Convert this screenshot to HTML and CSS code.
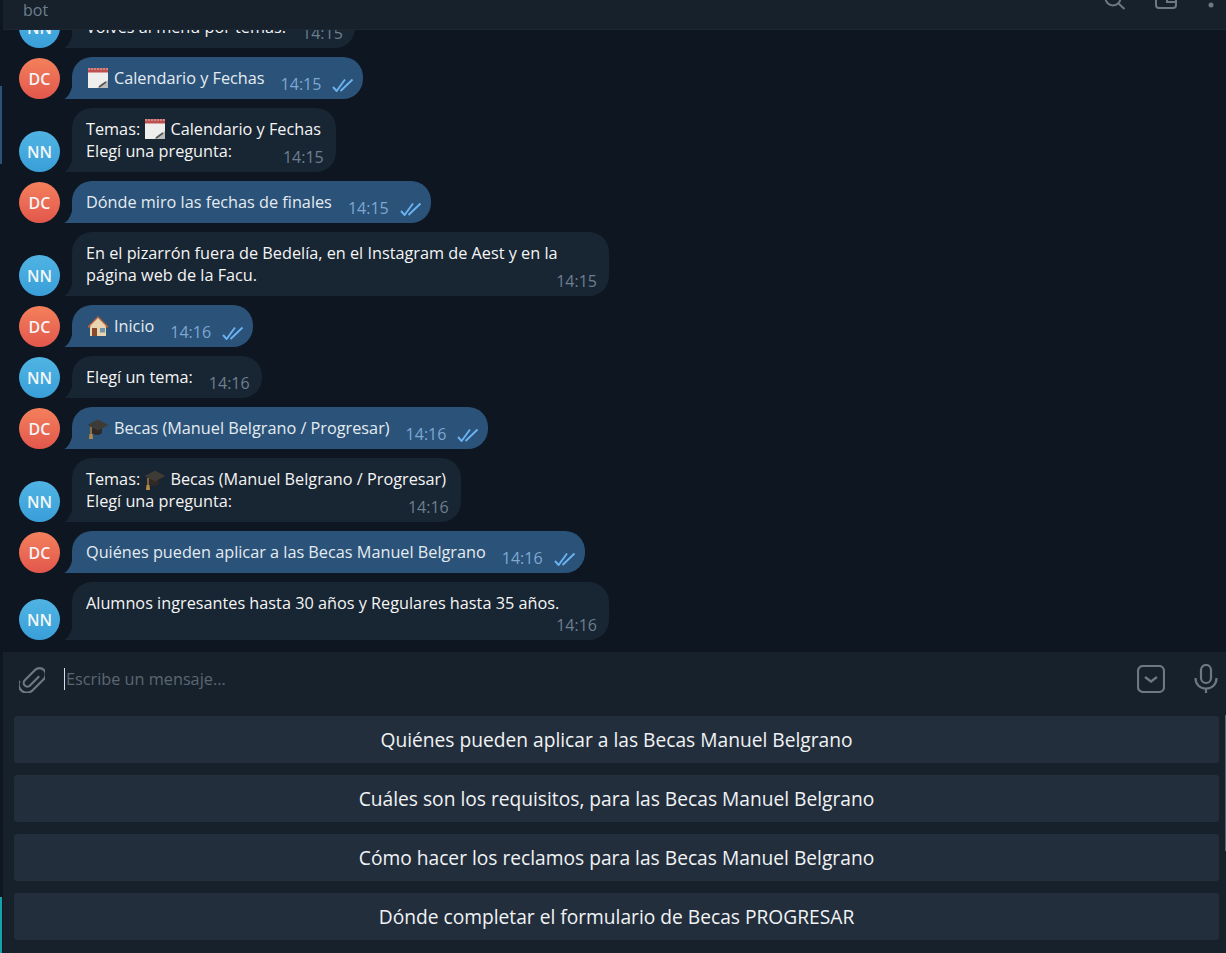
FILE: index.html
```html
<!DOCTYPE html>
<html lang="es">
<head>
<meta charset="utf-8">
<title>bot</title>
<link rel="stylesheet" href="styles.css">
</head>
<body>
<svg class="defs" width="0" height="0" aria-hidden="true">
  <defs>
    <symbol id="checks" viewBox="0 0 22 14">
      <path d="M1 9l3.600 4L13 1.500M8.500 13L20.500 1.500" fill="none" stroke="#6ab3f3" stroke-width="1.900"/>
    </symbol>
    <symbol id="cal" viewBox="0 0 22 22">
      <rect x="1" y="1" width="20" height="20" fill="#efeeec"/>
      <rect x="1" y="1" width="20" height="4.500" fill="#c0504f"/>
      <path d="M2 1v2M5 1v2M8 1v2M11 1v2M14 1v2M17 1v2M20 1v2" stroke="#ddd" stroke-width=".8"/>
      <path d="M10 21l11-8v8z" fill="#bcbcbc"/>
      <path d="M12 20l7-5" stroke="#555" stroke-width="1.600"/>
    </symbol>
    <symbol id="house" viewBox="0 0 22 22">
      <path d="M3 11h16v10H3z" fill="#e9d5b0"/>
      <path d="M11 1L0.500 11.500 2 13 11 4.500 20 13l1.500-1.500z" fill="#b5623f"/>
      <path d="M11 3L3 11h16z" fill="#e9d5b0"/>
      <rect x="5" y="13" width="5" height="8" fill="#8a4b2d"/>
      <rect x="13" y="13" width="5" height="4.500" fill="#6f93a8"/>
    </symbol>
    <symbol id="cap" viewBox="0 0 22 22">
      <path d="M5 10v6c2 2.500 8 2.500 10 0v-6z" fill="#2f2a26"/>
      <path d="M0.500 8L11 2.500 21.500 8 11 13.500z" fill="#3e3a36"/>
      <path d="M4 10v7" stroke="#a8793a" stroke-width="1.500"/>
      <path d="M2.500 17h3l.5 5H2z" fill="#b58a45"/>
    </symbol>
    <symbol id="tail-in" viewBox="0 0 8 12">
      <path d="M8 0v12H0c3-1 6-5 8-12z" fill="#182533"/>
    </symbol>
    <symbol id="tail-out" viewBox="0 0 8 12">
      <path d="M8 0v12H0c3-1 6-5 8-12z" fill="#2b5278"/>
    </symbol>
  </defs>
</svg>

<div class="app">
  <span class="edge edge--blue"></span>
  <span class="edge edge--teal"></span>
  <span class="edge edge--right"></span>

  <header class="topbar">
    <span class="topbar__sub">bot</span>
    <div class="topbar__icons">
      <svg class="ticon ticon--search" viewBox="0 0 24 10"><circle cx="9" cy="-2" r="7.500"/><path d="M14.500 3.500l6 5.500"/></svg>
      <svg class="ticon ticon--panel" viewBox="0 0 24 10"><rect x="2" y="-10" width="20" height="18" rx="3"/><path d="M13 -6v8h9"/></svg>
      <svg class="ticon ticon--dot" viewBox="0 0 6 10"><circle cx="3" cy="5" r="2.500"/></svg>
    </div>
  </header>

  <main class="chat">
    <div class="row">
      <div class="avatar avatar--nn">NN</div>
      <div class="bubble bubble--in"><svg class="tail"><use href="#tail-in"/></svg><span class="text">Volvés al menú por temas:</span><span class="meta"><span class="time">14:15</span></span></div>
    </div>
    <div class="row">
      <div class="avatar avatar--dc">DC</div>
      <div class="bubble bubble--out"><svg class="tail"><use href="#tail-out"/></svg><span class="text"><svg class="emoji"><use href="#cal"/></svg>Calendario y Fechas</span><span class="meta"><span class="time">14:15</span><svg class="checks"><use href="#checks"/></svg></span></div>
    </div>
    <div class="row">
      <div class="avatar avatar--nn">NN</div>
      <div class="bubble bubble--in"><svg class="tail"><use href="#tail-in"/></svg><span class="text">Temas: <svg class="emoji emoji--inline"><use href="#cal"/></svg>Calendario y Fechas<br>Elegí una pregunta:</span><span class="meta meta--overlap"><span class="time">14:15</span></span></div>
    </div>
    <div class="row">
      <div class="avatar avatar--dc">DC</div>
      <div class="bubble bubble--out"><svg class="tail"><use href="#tail-out"/></svg><span class="text">Dónde miro las fechas de finales</span><span class="meta"><span class="time">14:15</span><svg class="checks"><use href="#checks"/></svg></span></div>
    </div>
    <div class="row">
      <div class="avatar avatar--nn">NN</div>
      <div class="bubble bubble--in bubble--wide"><svg class="tail"><use href="#tail-in"/></svg><span class="text">En el pizarrón fuera de Bedelía, en el Instagram de Aest y en la<br>página web de la Facu.</span><span class="meta"><span class="time">14:15</span></span></div>
    </div>
    <div class="row">
      <div class="avatar avatar--dc">DC</div>
      <div class="bubble bubble--out"><svg class="tail"><use href="#tail-out"/></svg><span class="text"><svg class="emoji"><use href="#house"/></svg>Inicio</span><span class="meta"><span class="time">14:16</span><svg class="checks"><use href="#checks"/></svg></span></div>
    </div>
    <div class="row">
      <div class="avatar avatar--nn">NN</div>
      <div class="bubble bubble--in"><svg class="tail"><use href="#tail-in"/></svg><span class="text">Elegí un tema:</span><span class="meta"><span class="time">14:16</span></span></div>
    </div>
    <div class="row">
      <div class="avatar avatar--dc">DC</div>
      <div class="bubble bubble--out"><svg class="tail"><use href="#tail-out"/></svg><span class="text"><svg class="emoji"><use href="#cap"/></svg>Becas (Manuel Belgrano / Progresar)</span><span class="meta"><span class="time">14:16</span><svg class="checks"><use href="#checks"/></svg></span></div>
    </div>
    <div class="row">
      <div class="avatar avatar--nn">NN</div>
      <div class="bubble bubble--in"><svg class="tail"><use href="#tail-in"/></svg><span class="text">Temas: <svg class="emoji emoji--inline"><use href="#cap"/></svg>Becas (Manuel Belgrano / Progresar)<br>Elegí una pregunta:</span><span class="meta meta--overlap"><span class="time">14:16</span></span></div>
    </div>
    <div class="row">
      <div class="avatar avatar--dc">DC</div>
      <div class="bubble bubble--out"><svg class="tail"><use href="#tail-out"/></svg><span class="text">Quiénes pueden aplicar a las Becas Manuel Belgrano</span><span class="meta"><span class="time">14:16</span><svg class="checks"><use href="#checks"/></svg></span></div>
    </div>
    <div class="row">
      <div class="avatar avatar--nn">NN</div>
      <div class="bubble bubble--in bubble--wide bubble--stack"><svg class="tail"><use href="#tail-in"/></svg><span class="text">Alumnos ingresantes hasta 30 años y Regulares hasta 35 años.</span><span class="meta"><span class="time">14:16</span></span></div>
    </div>
  </main>

  <section class="composer">
    <svg class="cicon cicon--clip" viewBox="-13 -14 26 28"><g transform="rotate(45)"><path d="M3.200 -7V6a3.700 3.700 0 0 1-7.400 0V-8.500a6.300 6.300 0 0 1 12.600 0V7.500a8.200 8.200 0 0 1-16 2.500"/></g></svg>
    <div class="composer__input"><span class="caret"></span><span class="placeholder">Escribe un mensaje...</span></div>
    <svg class="cicon cicon--kbd" viewBox="0 0 28 28"><rect x="1" y="1" width="26" height="26" rx="5"/><path d="M8 12l6 4.500 6-4.500"/></svg>
    <svg class="cicon cicon--mic" viewBox="0 0 24 30"><rect x="7" y="1" width="10" height="18" rx="5"/><path d="M1.500 14c0 6.500 4.500 10.500 10.500 10.500S22.500 20.500 22.500 14M12 24.500V29"/></svg>
  </section>

  <nav class="keyboard">
    <button class="kbtn">Quiénes pueden aplicar a las Becas Manuel Belgrano</button>
    <button class="kbtn">Cuáles son los requisitos, para las Becas Manuel Belgrano</button>
    <button class="kbtn">Cómo hacer los reclamos para las Becas Manuel Belgrano</button>
    <button class="kbtn">Dónde completar el formulario de Becas PROGRESAR</button>
  </nav>
</div>
</body>
</html>
```
FILE: styles.css
```css
* { box-sizing: border-box; }
html, body { margin: 0; height: 100%; }
body {
  background: #0e1621;
  color: #f5f5f5;
  font-family: "Open Sans", "Noto Sans", sans-serif;
  font-size: 16.25px;
  line-height: 22px;
  overflow: hidden;
}
.defs { position: absolute; }
.app {
  position: relative;
  height: 953px;
  padding-left: 3px;
  display: flex;
  flex-direction: column;
  overflow: hidden;
}
.edge { position: absolute; left: 0; width: 2px; }
.edge--blue { top: 86px; height: 78px; background: #2b5278; }
.edge--teal { top: 897px; height: 56px; background: #14a3ad; }
.edge--right { left: auto; right: 0; width: 1px; top: 715px; height: 136px; background: #5b6670; }

.topbar {
  height: 30px;
  flex: none;
  background: #17212b;
  border-bottom: 1px solid #1c2733;
  display: flex;
  justify-content: space-between;
  align-items: flex-end;
  padding: 0 9px 9px 20px;
  position: relative;
}
.topbar__sub { color: #6d7f8f; font-size: 16px; line-height: 22px; margin-bottom: -1px; }
.topbar__icons {
  position: absolute;
  left: 1101px;
  top: 0;
  display: flex;
  gap: 25px;
}
.ticon { height: 10px; overflow: visible; fill: none; stroke: #6d7883; stroke-width: 2; }
.ticon--search, .ticon--panel { width: 24px; }
.ticon--panel { margin-left: 1px; }
.ticon--dot { width: 6px; fill: #6d7883; stroke: none; margin-left: 5px; }

.chat {
  height: 622px;
  flex: none;
  display: flex;
  flex-direction: column;
  justify-content: flex-end;
  gap: 9px;
  padding: 0 0 12px 16px;
  overflow: hidden;
}
.row { display: flex; align-items: flex-end; gap: 12px; flex: none; }
.avatar {
  width: 41px;
  height: 41px;
  border-radius: 50%;
  flex: none;
  display: flex;
  align-items: center;
  justify-content: center;
  color: #f2f6f8;
  font-size: 16px;
  font-weight: 600;
}
.avatar--nn { background: linear-gradient(#4fb4e3, #3a9fd8); }
.avatar--dc { background: linear-gradient(#f4805c, #e2574c); }

.bubble {
  position: relative;
  display: flex;
  justify-content: space-between;
  padding: 10px 12px 10px 14px;
  border-radius: 20px 20px 20px 0;
  white-space: nowrap;
}
.bubble--in { background: #182533; }
.bubble--out { background: #2b5278; color: #e4ecf2; padding-right: 9px; }
.bubble--wide { width: 537px; }
.bubble--wide .meta { margin-left: -10px; }
.bubble--stack { flex-direction: column; padding-bottom: 4px; }
.bubble--stack .meta { align-self: flex-end; margin: 0; }
.tail { position: absolute; left: -8px; bottom: 0; width: 8px; height: 12px; }
.text { display: block; }
.emoji { width: 22px; height: 22px; margin: 0 5px 0 1px; vertical-align: -5px; }
.emoji--inline { margin: 0 4px 0 0; }
.meta {
  display: flex;
  align-items: center;
  flex: none;
  align-self: flex-end;
  margin: 0 0 -6px 16px;
  height: 22px;
}
.meta--overlap { margin-left: -38px; }
.time { color: #6d7f8f; font-size: 16px; }
.bubble--out .time { color: #7da8d3; }
.checks { width: 22px; height: 14px; margin: 2px 0 0 11px; }

.composer {
  height: 62px;
  flex: none;
  background: #17212b;
  display: flex;
  align-items: center;
  padding: 0 8px 8px 16px;
}
.composer__input {
  flex: 1;
  display: flex;
  align-items: center;
  padding-left: 19px;
  color: #5a6773;
}
.caret { width: 1px; height: 22px; background: #d8e0e6; }
.placeholder { margin-left: 1px; }
.cicon { fill: none; stroke: #6d7883; stroke-width: 2.200; flex: none; }
.cicon--clip { width: 26px; height: 28px; }
.cicon--kbd { width: 28px; height: 28px; margin-right: 29px; }
.cicon--mic { width: 24px; height: 30px; }

.keyboard {
  display: flex;
  flex-direction: column;
  gap: 12px;
  padding: 2px 7px 13px 11px;
  background: #17212b;
  flex-grow: 1;
}
.kbtn {
  height: 47px;
  border: 0;
  border-radius: 3px;
  background: #232e3c;
  color: #f0f3f5;
  font-family: inherit;
  font-size: 19.2px;
  font-weight: 500;
  padding: 0;
}
```
